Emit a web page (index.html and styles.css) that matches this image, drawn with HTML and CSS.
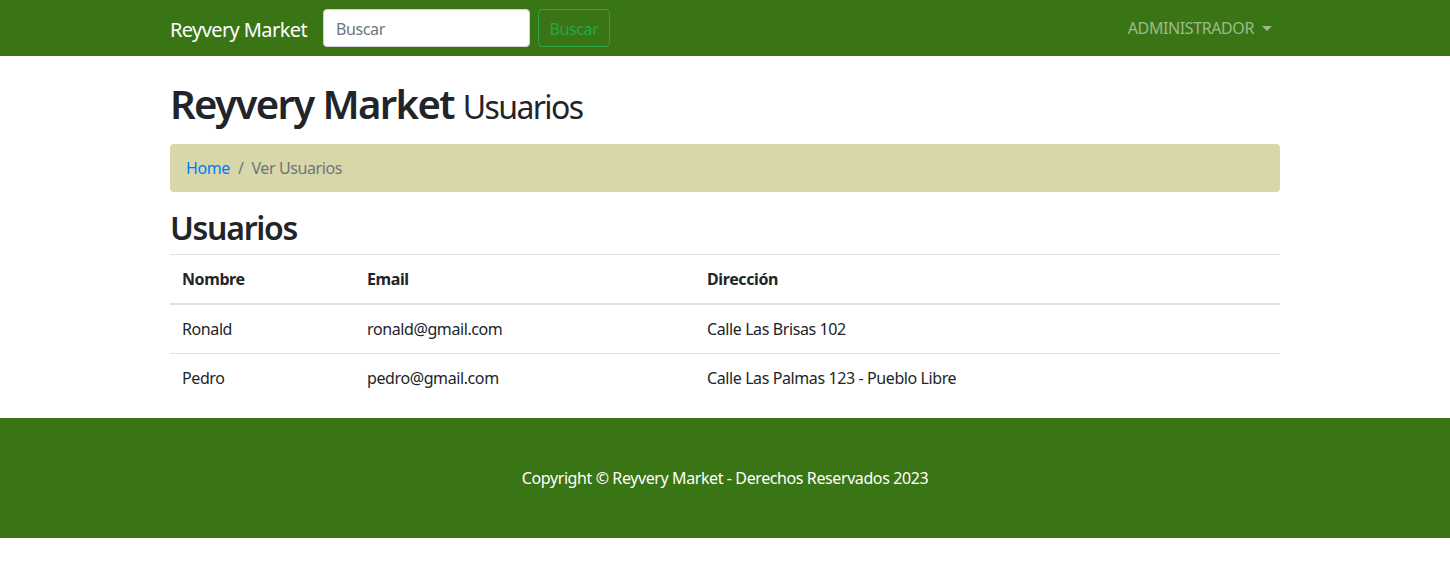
FILE: index.html
```html
<!DOCTYPE html>
<html lang="es">
<head>
<meta charset="utf-8">
<title>Reyvery Market - Usuarios</title>
<link rel="stylesheet" href="styles.css">
</head>
<body>
<nav class="navbar">
  <div class="container nav-inner">
    <a class="brand" href="#">Reyvery Market</a>
    <form class="search">
      <input class="search-input" type="text" placeholder="Buscar">
      <button class="search-btn" type="button">Buscar</button>
    </form>
    <div class="nav-right">
      <a class="nav-link" href="#">ADMINISTRADOR<span class="caret"></span></a>
    </div>
  </div>
</nav>

<main class="container main">
  <h1 class="title">Reyvery Market <small>Usuarios</small></h1>
  <ol class="breadcrumb">
    <li><a href="#">Home</a></li>
    <li class="sep">/</li>
    <li class="active">Ver Usuarios</li>
  </ol>
  <h2 class="subtitle">Usuarios</h2>
  <table class="table">
    <thead>
      <tr><th class="c1">Nombre</th><th class="c2">Email</th><th>Dirección</th></tr>
    </thead>
    <tbody>
      <tr><td>Ronald</td><td>ronald@gmail.com</td><td>Calle Las Brisas 102</td></tr>
      <tr><td>Pedro</td><td>pedro@gmail.com</td><td>Calle Las Palmas 123 - Pueblo Libre</td></tr>
    </tbody>
  </table>
</main>

<footer class="footer">
  <p>Copyright © Reyvery Market - Derechos Reservados 2023</p>
</footer>
</body>
</html>
```

FILE: styles.css
```css
* { box-sizing: border-box; }
html, body { margin: 0; padding: 0; }
body {
  font-family: "Segoe UI", "Noto Sans", "Open Sans", sans-serif;
  font-size: 16px;
  line-height: 1.5;
  letter-spacing: -0.025em;
  color: #212529;
  background: #fff;
}
.container {
  width: 1140px;
  margin: 0 auto;
  padding: 0 15px;
}
.navbar {
  background: #3a7515;
  padding: 8px 0;
}
.nav-inner {
  display: flex;
  align-items: center;
  height: 40px;
}
.brand {
  color: #fff;
  text-decoration: none;
  font-size: 20px;
  line-height: 30px;
  letter-spacing: -0.03em;
  margin-right: 16px;
  padding: 7px 0 3px;
}
.search { display: flex; align-items: center; }
.search-input {
  width: 207px;
  height: 38px;
  padding: 7px 12px 5px;
  font: inherit;
  font-size: 16px;
  letter-spacing: -0.025em;
  border: 1px solid #ced4da;
  border-radius: 4px;
  margin-right: 8px;
  color: #495057;
  background: #fff;
}
.search-input::placeholder { color: #6c757d; }
.search-btn {
  height: 38px;
  padding: 6px 10.5px 4px;
  font: inherit;
  font-size: 16px;
  letter-spacing: -0.025em;
  color: #28a745;
  background: transparent;
  border: 1px solid #28a745;
  border-radius: 4px;
}
.nav-right { margin-left: auto; }
.nav-link {
  color: rgba(255,255,255,.5);
  text-decoration: none;
  padding: 8px;
  display: inline-flex;
  align-items: center;
}
.caret {
  display: inline-block;
  margin-left: 8px;
  width: 0; height: 0;
  border-top: 5px solid rgba(255,255,255,.5);
  border-left: 5px solid transparent;
  border-right: 5px solid transparent;
}
.main { padding-top: 24px; }
.title {
  font-size: 40px;
  font-weight: 600;
  line-height: 1.2;
  letter-spacing: -0.04em;
  margin: 0 0 16px;
}
.title small {
  font-size: 80%;
  font-weight: 400;
}
.breadcrumb {
  list-style: none;
  display: flex;
  margin: 0 0 16px;
  padding: 12px 16px;
  background: #d8d7a9;
  border-radius: 4px;
}
.breadcrumb a { color: #007bff; text-decoration: none; }
.breadcrumb .sep { color: #6c757d; padding: 0 8px; }
.breadcrumb .active { color: #6c757d; }
.subtitle {
  font-size: 32px;
  font-weight: 600;
  line-height: 1.2;
  letter-spacing: -0.04em;
  margin: 0 0 7px;
  padding-top: 1px;
}
.table {
  width: 100%;
  border-collapse: collapse;
  margin-bottom: 16px;
}
.table th, .table td {
  padding: 12px;
  text-align: left;
  border-top: 1px solid #dee2e6;
  vertical-align: top;
}
.table th { font-weight: 700; }
.table thead th { border-bottom: 2px solid #dee2e6; }
.c1 { width: 185px; }
.c2 { width: 340px; }
.footer {
  background: #3a7515;
  padding: 48px 0;
  text-align: center;
  color: #fff;
}
.footer p { margin: 0; }
```
